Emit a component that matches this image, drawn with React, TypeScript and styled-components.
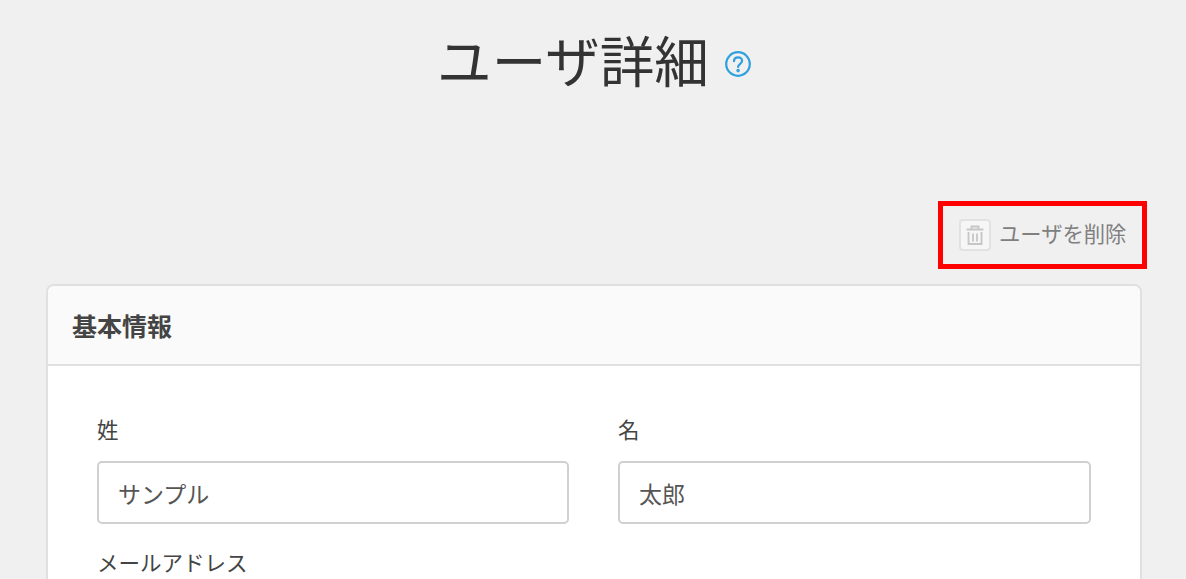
import React from "react";
import styled, { createGlobalStyle } from "styled-components";

const Global = createGlobalStyle`
  html, body { margin: 0; padding: 0; background: #f0f0f0; height: 100%; overflow: hidden; }
  body { font-family: "Noto Sans CJK JP", "Liberation Sans", sans-serif; color: #333; }
`;
const Page = styled.div`
  width: 1186px; height: 579px; overflow: hidden; display: flex; flex-direction: column; background: #f0f0f0;
`;
const TitleRow = styled.header`
  display: flex; justify-content: center; align-items: center; gap: 15px;
  height: 62px; margin-top: 31px; padding-left: 3px;
`;
const Title = styled.h1`
  margin: 0 0 6px; font-size: 54.6px; line-height: 62px; font-weight: 400; color: #333;
`;
const HelpIcon = styled.svg`
  margin-top: 4px; flex: none;
`;
const Actions = styled.div`
  display: flex; justify-content: flex-end; margin-top: 108px; padding-right: 39px;
`;
const DeleteBox = styled.div`
  box-sizing: border-box; width: 209px; height: 68px; border: 5px solid #ff0000;
  display: flex; align-items: center; gap: 8px; padding-left: 16px;
`;
const TrashTile = styled.span`
  box-sizing: border-box; width: 32px; height: 32px; border: 2px solid #e2e2e2; border-radius: 4px;
  background: #f6f6f6; display: flex; align-items: center; justify-content: center;
`;
const DeleteLabel = styled.span`
  font-size: 21.3px; line-height: 28px; color: #808080; margin-bottom: 4px;
`;
const Card = styled.section`
  box-sizing: border-box; width: 1096px; margin: 15px 0 0 46px; background: #fff;
  border: 2px solid #e0e0e0; border-bottom: 0; border-radius: 8px 8px 0 0; flex: 1 0 auto; overflow: hidden;
`;
const CardHeader = styled.div`
  box-sizing: border-box; height: 80px; background: #fafafa; border-bottom: 2px solid #e0e0e0;
  padding: 0 24px; display: flex; align-items: center;
`;
const CardTitle = styled.h2`
  margin: 0; font-size: 25px; line-height: 32px; font-weight: 700; color: #444;
`;
const CardBody = styled.div`
  padding: 46px 49px 0;
`;
const Fields = styled.div`
  display: grid; grid-template-columns: 472px 473px; column-gap: 49px;
`;
const Field = styled.div`
  display: flex; flex-direction: column;
`;
const Label = styled.label`
  font-size: 21.5px; line-height: 34px; color: #444; margin-bottom: 15px;
`;
const Input = styled.div`
  box-sizing: border-box; height: 63px; border: 2px solid #d0d0d0; border-radius: 5px;
  padding: 0 19px; display: flex; align-items: center; font-size: 23px; color: #555; background: #fff;
`;
const EmailLabel = styled(Label)`
  display: block; margin: 21px 0 0;
`;

export default function App() {
  return (
    <Page>
      <Global />
      <TitleRow>
        <Title>ユーザ詳細</Title>
        <HelpIcon width="28" height="28" viewBox="0 0 28 28" fill="none" stroke="#2e9fdf" strokeWidth="2.2" strokeLinecap="round">
          <circle cx="14" cy="14" r="11.8" />
          <path d="M10 11.2c0-2.4 1.8-3.9 4.1-3.9 2.3 0 4 1.5 4 3.5 0 3-4 3-4 6.2" />
          <circle cx="14.1" cy="20.6" r="0.7" fill="#2e9fdf" />
        </HelpIcon>
      </TitleRow>
      <Actions>
        <DeleteBox>
          <TrashTile>
            <svg width="22" height="22" viewBox="0 0 22 22" fill="none" stroke="#c6c6c6" strokeWidth="1.8">
              <path d="M2.5 5.5h17M7.5 5.5V2.5h7v3M4.5 8v12h13V8M9 9.5v8M13 9.5v8" />
            </svg>
          </TrashTile>
          <DeleteLabel>ユーザを削除</DeleteLabel>
        </DeleteBox>
      </Actions>
      <Card>
        <CardHeader>
          <CardTitle>基本情報</CardTitle>
        </CardHeader>
        <CardBody>
          <Fields>
            <Field>
              <Label>姓</Label>
              <Input>サンプル</Input>
            </Field>
            <Field>
              <Label>名</Label>
              <Input>太郎</Input>
            </Field>
          </Fields>
          <EmailLabel>メールアドレス</EmailLabel>
        </CardBody>
      </Card>
    </Page>
  );
}
